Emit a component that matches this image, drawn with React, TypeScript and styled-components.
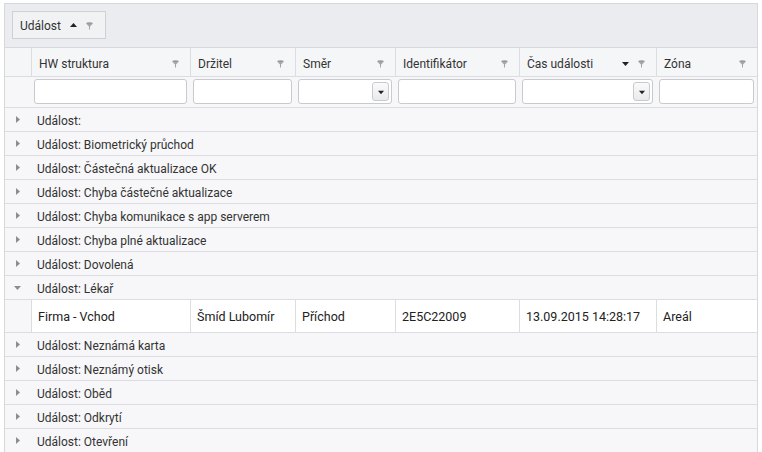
import React from 'react';
import styled, { createGlobalStyle } from 'styled-components';

const GlobalStyle = createGlobalStyle`
  html, body {
    margin: 0;
    padding: 0;
    background: #ffffff;
    font-family: Roboto, 'Liberation Sans', sans-serif;
    color: #333333;
    overflow: hidden;
  }
`;

const COLS = '26px 159px 105px 100px 124px 137px 1fr';

const Page = styled.div`
  padding: 3px 4px 0 4px;
  height: 449px;
  overflow: hidden;
`;

const Grid = styled.div`
  border: 1px solid #d7d8db;
  background: #f7f7f9;
`;

const GroupPanel = styled.div`
  height: 44px;
  background: #ebecef;
  border-bottom: 1px solid #d7d8db;
  display: flex;
  align-items: flex-start;
  padding: 7px 0 0 7px;
  box-sizing: border-box;
`;

const GroupChip = styled.div`
  height: 28px;
  box-sizing: border-box;
  border: 1px solid #cfd0d4;
  background: #f1f2f4;
  display: flex;
  align-items: center;
  padding: 1px 12px 0 7px;
  gap: 9px;
  font-size: 12px;
  color: #333;
`;

const Row = styled.div<{ $height: number; $bg?: string }>`
  display: grid;
  grid-template-columns: ${COLS};
  height: ${(p) => p.$height}px;
  box-sizing: border-box;
  border-bottom: 1px solid #dcdde0;
  background: ${(p) => p.$bg || '#f7f7f9'};
`;

const HeadCell = styled.div`
  border-left: 1px solid #dcdde0;
  display: flex;
  align-items: center;
  padding: 3px 11px 0 7px;
  font-size: 12px;
  color: #333;
  gap: 9px;
  min-width: 0;
`;

const HeadLabel = styled.span`
  flex: 1;
  white-space: nowrap;
`;

const FilterCell = styled.div`
  padding: 2px 3px 0 3px;
  min-width: 0;
`;

const FilterBox = styled.div`
  height: 25px;
  box-sizing: border-box;
  border: 1px solid #c9cacd;
  border-radius: 3px;
  background: #fff;
  display: flex;
  justify-content: flex-end;
  padding: 2px;
`;

const DropButton = styled.div`
  width: 17px;
  box-sizing: border-box;
  border: 1px solid #c9cacd;
  border-radius: 3px;
  background: linear-gradient(#fafafa, #e9eaec);
  display: flex;
  align-items: center;
  justify-content: center;
`;

const Expander = styled.div`
  display: flex;
  align-items: center;
  justify-content: center;
  padding-right: 2px;
`;

const GroupText = styled.div`
  grid-column: 2 / -1;
  display: flex;
  align-items: center;
  padding: 2px 0 0 6px;
  font-size: 12px;
  color: #333;
  white-space: nowrap;
`;

const DataCell = styled.div`
  border-left: 1px solid #dcdde0;
  background: #ffffff;
  display: flex;
  align-items: center;
  padding: 1px 0 0 6px;
  font-size: 12.5px;
  color: #222;
  white-space: nowrap;
`;

const FilterIcon = () => (
  <svg width="7" height="8" viewBox="0 0 7 8">
    <ellipse cx="3.5" cy="1.6" rx="3.2" ry="1.3" fill="#9a9b9e" />
    <path d="M1 2.4 H6 L4 4.6 V7.5 H3 V4.6 Z" fill="#a4a5a8" />
  </svg>
);

const Tri = ({ dir, color = '#222', size = 7 }: { dir: 'up' | 'down' | 'right'; color?: string; size?: number }) => {
  const d =
    dir === 'up' ? 'M0 5 L3.5 1 L7 5 Z' : dir === 'down' ? 'M0 2 L7 2 L3.5 6 Z' : 'M2 0 L6 3.5 L2 7 Z';
  return (
    <svg width={size} height={size} viewBox="0 0 7 7">
      <path d={d} fill={color} />
    </svg>
  );
};

const headers: { label: string; sort?: boolean }[] = [
  { label: 'HW struktura' },
  { label: 'Držitel' },
  { label: 'Směr' },
  { label: 'Identifikátor' },
  { label: 'Čas události', sort: true },
  { label: 'Zóna' },
];

const dropdownCols = [2, 4];

const groupsBefore = [
  'Událost:',
  'Událost: Biometrický průchod',
  'Událost: Částečná aktualizace OK',
  'Událost: Chyba částečné aktualizace',
  'Událost: Chyba komunikace s app serverem',
  'Událost: Chyba plné aktualizace',
  'Událost: Dovolená',
];

const groupsAfter = [
  'Událost: Neznámá karta',
  'Událost: Neznámý otisk',
  'Událost: Oběd',
  'Událost: Odkrytí',
  'Událost: Otevření',
];

const dataRow = ['Firma - Vchod', 'Šmíd Lubomír', 'Příchod', '2E5C22009', '13.09.2015 14:28:17', 'Areál'];

const GroupRow = ({ text, open }: { text: string; open?: boolean }) => (
  <Row $height={24}>
    <Expander>
      <Tri dir={open ? 'down' : 'right'} color="#8c8d90" size={7} />
    </Expander>
    <GroupText>{text}</GroupText>
  </Row>
);

export default function App() {
  return (
    <>
      <GlobalStyle />
      <Page>
        <Grid>
          <GroupPanel>
            <GroupChip>
              <span>Událost</span>
              <Tri dir="up" size={7} />
              <FilterIcon />
            </GroupChip>
          </GroupPanel>
          <Row $height={29} $bg="#f5f6f8">
            <div />
            {headers.map((h) => (
              <HeadCell key={h.label}>
                <HeadLabel>{h.label}</HeadLabel>
                {h.sort && <Tri dir="down" size={7} />}
                <FilterIcon />
              </HeadCell>
            ))}
          </Row>
          <Row $height={31}>
            <div />
            {headers.map((h, i) => (
              <FilterCell key={h.label}>
                <FilterBox>
                  {dropdownCols.includes(i) && (
                    <DropButton>
                      <Tri dir="down" size={6} />
                    </DropButton>
                  )}
                </FilterBox>
              </FilterCell>
            ))}
          </Row>
          {groupsBefore.map((g) => (
            <GroupRow key={g} text={g} />
          ))}
          <GroupRow text="Událost: Lékař" open />
          <Row $height={33}>
            <div />
            {dataRow.map((v) => (
              <DataCell key={v}>{v}</DataCell>
            ))}
          </Row>
          {groupsAfter.map((g) => (
            <GroupRow key={g} text={g} />
          ))}
        </Grid>
      </Page>
    </>
  );
}
